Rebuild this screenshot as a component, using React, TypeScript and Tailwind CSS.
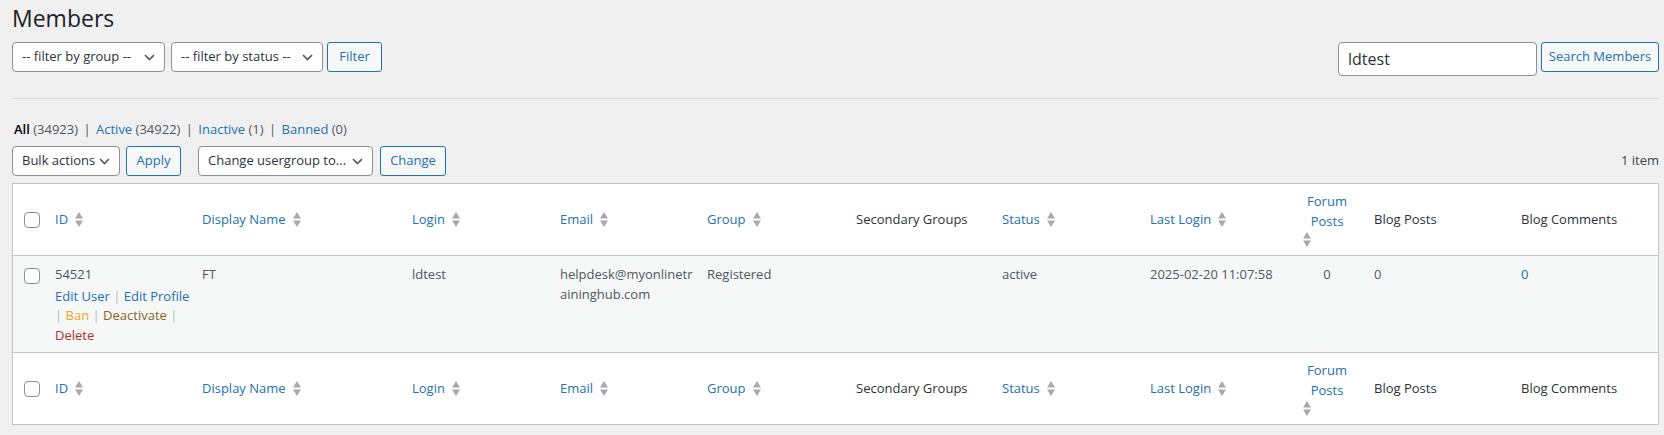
import React from 'react';

type Column = {
  label: string;
  sortable: boolean;
  width: string;
  center?: boolean;
};

const COLUMNS: Column[] = [
  { label: 'ID', sortable: true, width: 'w-[147px]' },
  { label: 'Display Name', sortable: true, width: 'w-[210px]' },
  { label: 'Login', sortable: true, width: 'w-[148px]' },
  { label: 'Email', sortable: true, width: 'w-[147px]' },
  { label: 'Group', sortable: true, width: 'w-[149px]' },
  { label: 'Secondary Groups', sortable: false, width: 'w-[146px]' },
  { label: 'Status', sortable: true, width: 'w-[148px]' },
  { label: 'Last Login', sortable: true, width: 'w-[150px]' },
  { label: 'Forum Posts', sortable: true, width: 'w-[74px]', center: true },
  { label: 'Blog Posts', sortable: false, width: 'w-[147px]' },
  { label: 'Blog Comments', sortable: false, width: 'w-[147px]' },
];

const SortArrows = () => (
  <svg width="8" height="15" viewBox="0 0 8 15" className="shrink-0">
    <path d="M4 0L8 6.5H0z" fill="#a7aaad" />
    <path d="M0 8.5H8L4 15z" fill="#a7aaad" />
  </svg>
);

const Chevron = () => (
  <svg width="11" height="7" viewBox="0 0 11 7" className="shrink-0">
    <path d="M1 1l4.5 4.5L10 1" fill="none" stroke="#50575e" strokeWidth="1.6" />
  </svg>
);

const Checkbox = () => (
  <span className="block w-4 h-4 bg-white border border-[#8c8f94] rounded-[4px]" />
);

const Select = ({ label, className }: { label: string; className: string }) => (
  <div
    className={`flex items-center justify-between h-[30px] pl-[9px] pr-[9px] bg-white border border-[#8c8f94] rounded-[4px] text-[13px] text-[#2c3338] ${className}`}
  >
    <span className="whitespace-nowrap">{label}</span>
    <Chevron />
  </div>
);

const Button = ({ label, className }: { label: string; className: string }) => (
  <button
    type="button"
    className={`h-[30px] flex items-center justify-center border border-[#2271b1] bg-[#f6f7f7] text-[#2271b1] rounded-[3px] text-[13px] whitespace-nowrap ${className}`}
  >
    {label}
  </button>
);

const Sep = () => <span className="text-[#a9bccc]">|</span>;

const ViewSep = () => <span className="text-[#50575e] mx-[2px]">|</span>;

const HeaderRow = ({ position }: { position: 'top' | 'bottom' }) => {
  const border = position === 'top' ? 'border-b' : 'border-t';
  return (
    <tr>
      <th className={`w-[32px] h-[72px] pl-[11px] align-middle ${border} border-[#c3c4c7]`}>
        <Checkbox />
      </th>
      {COLUMNS.map((col) => (
        <th
          key={col.label}
          className={`${col.width} px-[10px] py-2 align-middle text-left font-normal text-[13px] leading-[19.5px] ${border} border-[#c3c4c7]`}
        >
          {col.center ? (
            <div className="text-[#2271b1]">
              <div className="text-center">Forum Posts</div>
              <div className="ml-[3px] mt-[1px]">
                <SortArrows />
              </div>
            </div>
          ) : col.sortable ? (
            <div className="flex items-center gap-[7px] text-[#2271b1]">
              <span>{col.label}</span>
              <SortArrows />
            </div>
          ) : (
            <span className="text-[#2c3338]">{col.label}</span>
          )}
        </th>
      ))}
    </tr>
  );
};

export default function App() {
  return (
    <div className="min-h-[435px] bg-[#f0f0f1] pl-3 pr-[5px] font-['Open_Sans',sans-serif] text-[13px] text-[#3c434a]">
      <h1 className="pt-[3px] text-[23px] leading-[30px] font-normal text-[#1d2327]">Members</h1>

      <div className="mt-[9px] flex items-start justify-between">
        <div className="flex items-center">
          <Select label="-- filter by group --" className="w-[153px]" />
          <Select label="-- filter by status --" className="w-[152px] ml-[6px]" />
          <Button label="Filter" className="w-[55px] ml-[4px]" />
        </div>
        <div className="flex items-start">
          <div className="w-[199px] h-[34px] flex items-center px-[9px] bg-white border border-[#8c8f94] rounded-[4px] text-[16px] text-[#2c3338]">
            ldtest
          </div>
          <Button label="Search Members" className="w-[118px] ml-[4px]" />
        </div>
      </div>

      <div className="mt-[22px] border-t border-[#dcdcde]" />

      <div className="mt-[17px] leading-[26px] text-[13px] pl-[2px]">
        <span className="font-semibold text-black">All</span>{' '}
        <span className="text-[#50575e]">(34923)</span> <ViewSep />{' '}
        <span className="text-[#2271b1]">
          Active <span className="text-[#50575e]">(34922)</span>
        </span>{' '}
        <ViewSep />{' '}
        <span className="text-[#2271b1]">
          Inactive <span className="text-[#50575e]">(1)</span>
        </span>{' '}
        <ViewSep />{' '}
        <span className="text-[#2271b1]">
          Banned <span className="text-[#50575e]">(0)</span>
        </span>
      </div>

      <div className="mt-[4px] flex items-center justify-between">
        <div className="flex items-center">
          <Select label="Bulk actions" className="w-[108px]" />
          <Button label="Apply" className="w-[55px] ml-[6px]" />
          <Select label="Change usergroup to..." className="w-[175px] ml-[17px]" />
          <Button label="Change" className="w-[66px] ml-[7px]" />
        </div>
        <span className="text-[13px] text-[#3c434a]">1 item</span>
      </div>

      <table className="mt-[7px] w-full table-fixed border-separate border-spacing-0 border border-[#c3c4c7] bg-white">
        <thead>
          <HeaderRow position="top" />
        </thead>
        <tbody className="bg-[#f6f7f7] text-[13px] leading-[19.5px] text-[#50575e]">
          <tr>
            <td className="pl-[11px] pt-[12px] align-top">
              <Checkbox />
            </td>
            <td className="px-[10px] pt-[9px] pb-[7px] align-top">
              <div>54521</div>
              <div className="pt-[2px] whitespace-nowrap">
                <div>
                  <span className="text-[#2271b1]">Edit User</span> <Sep />{' '}
                  <span className="text-[#2271b1]">Edit Profile</span>
                </div>
                <div>
                  <Sep /> <span className="text-[#f0a52a]">Ban</span> <Sep />{' '}
                  <span className="text-[#86661a]">Deactivate</span> <Sep />
                </div>
                <div className="text-[#b32d2e]">Delete</div>
              </div>
            </td>
            <td className="px-[10px] pt-[9px] align-top">FT</td>
            <td className="px-[10px] pt-[9px] align-top">ldtest</td>
            <td className="px-[10px] pt-[9px] align-top whitespace-nowrap">
              helpdesk@myonlinetr
              <br />
              aininghub.com
            </td>
            <td className="px-[10px] pt-[9px] align-top">Registered</td>
            <td className="px-[10px] pt-[9px] align-top" />
            <td className="px-[10px] pt-[9px] align-top">active</td>
            <td className="px-[10px] pt-[9px] align-top whitespace-nowrap">2025-02-20 11:07:58</td>
            <td className="px-[10px] pt-[9px] align-top text-center">0</td>
            <td className="px-[10px] pt-[9px] align-top">0</td>
            <td className="px-[10px] pt-[9px] align-top text-[#2271b1]">0</td>
          </tr>
        </tbody>
        <tfoot>
          <HeaderRow position="bottom" />
        </tfoot>
      </table>
    </div>
  );
}
